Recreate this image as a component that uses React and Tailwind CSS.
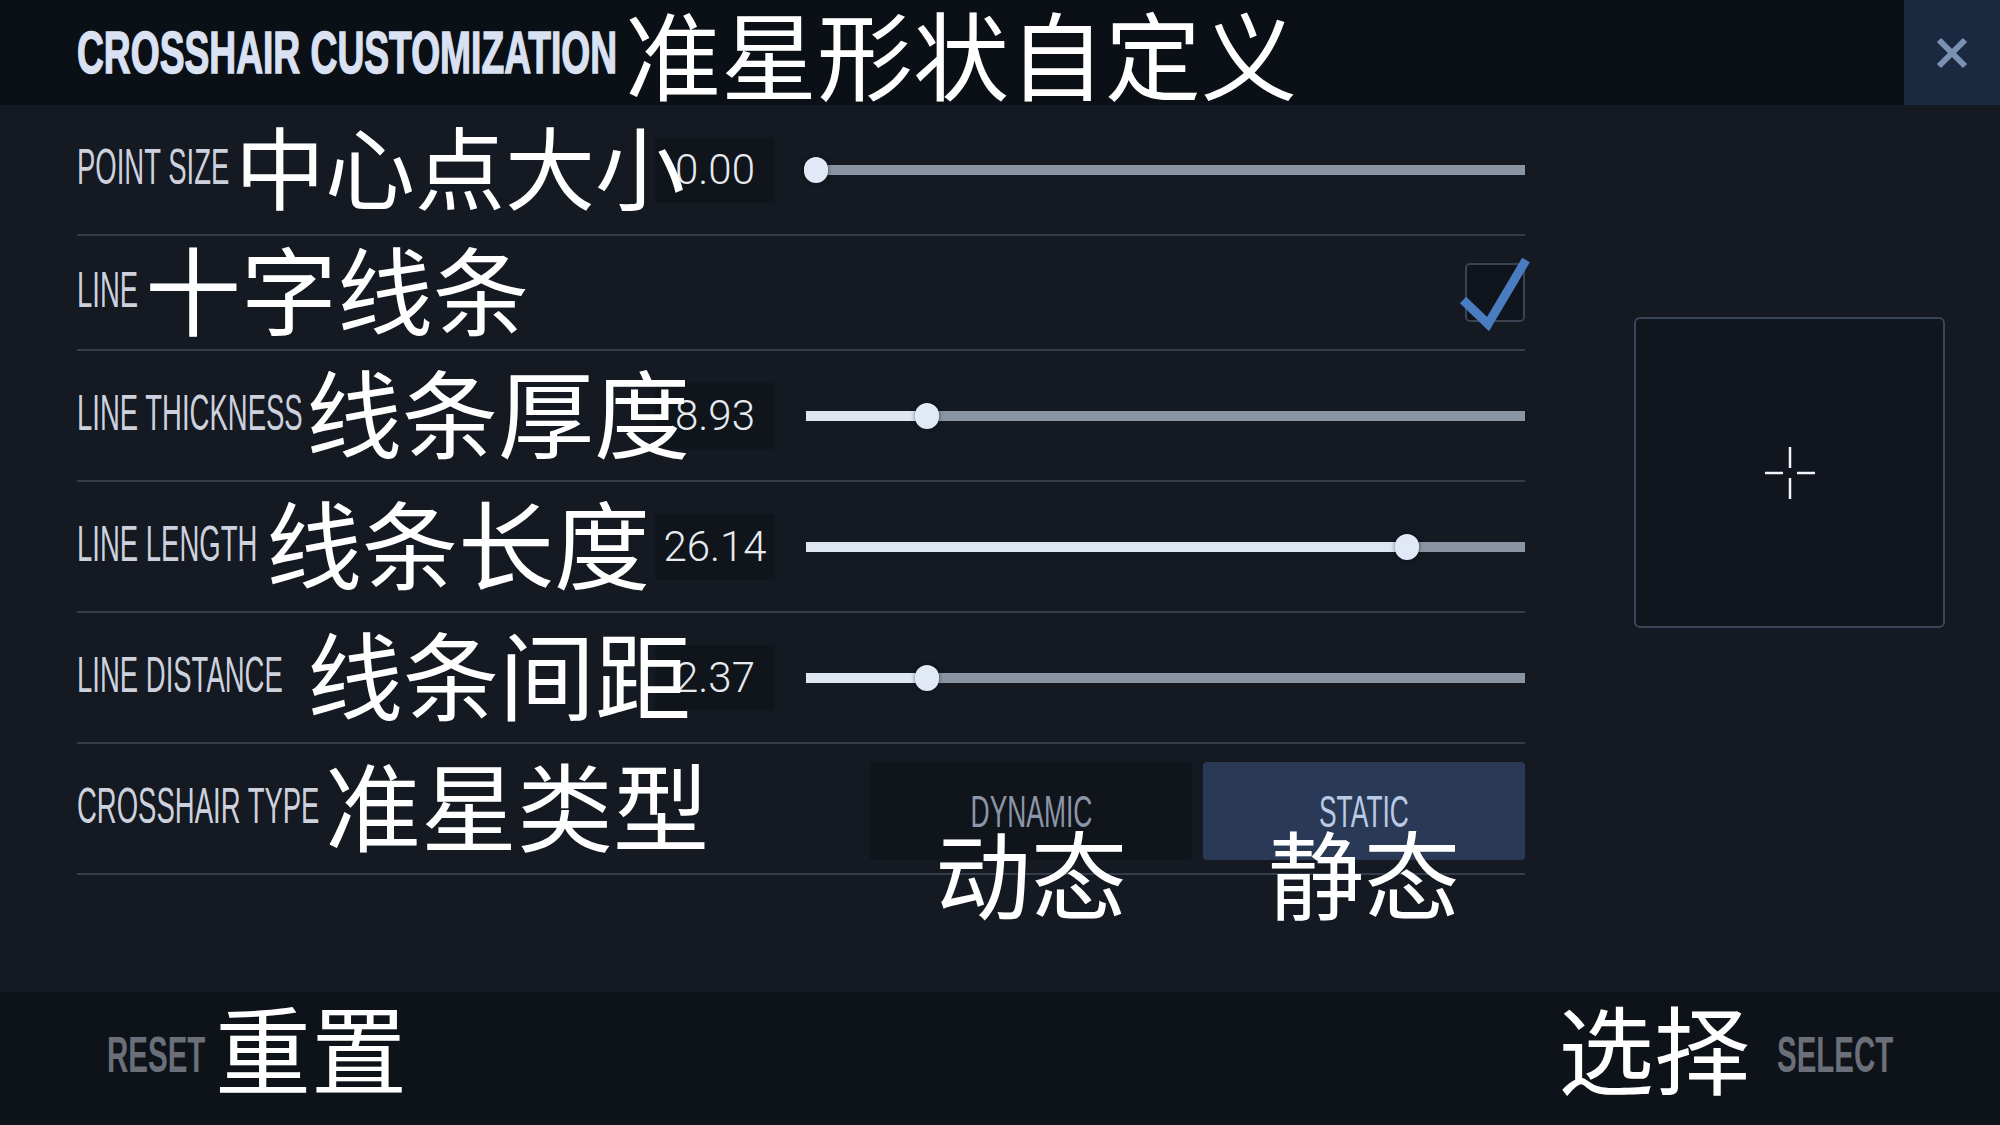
import React from 'react';

const sans = "font-['Liberation_Sans',Arial,sans-serif]";
const zh = "font-['Noto_Sans_CJK_SC','Noto_Sans',sans-serif]";

// Condensed caps: the game font is narrow, so squeeze Liberation Sans horizontally
function Cond({ children, className = '' }) {
    return <span className={`inline-block whitespace-nowrap leading-none ${sans} ${className}`}>{children}</span>;
}

function Zh({ children, className = 'relative' }) {
    return <span className={`z-10 inline-block whitespace-nowrap leading-none font-normal text-white ${zh} ${className}`}>{children}</span>;
}

function Label({ text, width, cjk, cjkSize = 'text-[96px]' }) {
    return (
        <div className="flex items-center shrink-0">
            <div className={`${width} shrink-0 -translate-y-[3px]`}>
                <Cond className="origin-left scale-x-[0.55] text-[50px] text-[#cdd1dd]">{text}</Cond>
            </div>
            <Zh className={`relative -translate-y-[6px] ${cjkSize}`}>{cjk}</Zh>
        </div>
    );
}

function Slider({ thumb }) {
    // thumb = centre of the knob, px from the start of the track
    return (
        <div className="relative w-[719px] h-[10px] bg-[#8a94a3] ml-[31px]">
            <div className="absolute left-0 top-0 h-full bg-[#dee6f2]" style={{ width: thumb }} />
            <div
                className="absolute top-1/2 -translate-y-1/2 -translate-x-1/2 w-[24px] h-[26px] rounded-full bg-[#e1e9f6] shadow-[0_0_4px_rgba(0,0,0,0.5)]"
                style={{ left: thumb }}
            />
        </div>
    );
}

function SliderRow({ label, width, cjk, cjkSize, value, thumb }) {
    return (
        <div className="h-[131px] border-b-2 border-[#363d4a] flex items-center">
            <div className="w-[578px] shrink-0 flex items-center">
                <Label text={label} width={width} cjk={cjk} cjkSize={cjkSize} />
            </div>
            <div className="w-[120px] h-[66px] shrink-0 bg-[#10141b] flex items-center justify-center">
                <span className="font-['Roboto',sans-serif] font-light text-[42px] leading-none text-[#e7eaef]">{value}</span>
            </div>
            <Slider thumb={thumb} />
        </div>
    );
}

function TypeButton({ en, cjk, active }) {
    return (
        <div className={`relative w-[322px] h-[98px] rounded-[4px] flex justify-center pt-[28px] ${active ? 'bg-[#2a3a56]' : 'bg-[#10141b]'}`}>
            <Cond className={`origin-center scale-x-[0.6] text-[44px] ${active ? 'text-[#b9cae6]' : 'text-[#8c96a8]'}`}>{en}</Cond>
            <Zh className="absolute top-[61px] left-1/2 -translate-x-1/2 text-[96px]">{cjk}</Zh>
        </div>
    );
}

export default function App() {
    return (
        <div className="w-[2000px] h-[1125px] flex flex-col bg-[#141922] overflow-hidden">
            {/* Header */}
            <div className="h-[105px] shrink-0 bg-[#0b0f16] flex items-center pl-[77px]">
                <div className="w-[548px] shrink-0">
                    <Cond className="origin-left scale-x-[0.62] text-[60px] font-bold text-[#d9e1f3] [-webkit-text-stroke:1.5px_#d9e1f3]">CROSSHAIR CUSTOMIZATION</Cond>
                </div>
                <Zh className="relative -translate-y-[1px] text-[96px]">准星形状自定义</Zh>
                <button className="ml-auto w-[96px] h-full bg-[#1a2940] flex items-center justify-center">
                    <svg width="32" height="32" viewBox="0 0 32 32">
                        <path d="M3 3 L29 29 M29 3 L3 29" stroke="#7b91b4" strokeWidth="6" />
                    </svg>
                </button>
            </div>

            {/* Settings */}
            <div className="flex-1 flex">
                <div className="ml-[77px] w-[1448px] shrink-0">
                    <SliderRow label="POINT SIZE" width="w-[158px]" cjk="中心点大小" cjkSize="text-[90px]" value="0.00" thumb={10} />

                    <div className="h-[115px] border-b-2 border-[#363d4a] flex items-center">
                        <Label text="LINE" width="w-[68px]" cjk="十字线条" />
                        <div className="ml-auto relative w-[60px] h-[59px] border-2 border-[#3a4352] rounded-[5px] bg-[#10141c]">
                            <svg className="absolute -left-[10px] -top-[10px]" width="80" height="80" viewBox="0 0 80 80">
                                <path d="M6 45 L31 69 L69 5" fill="none" stroke="#4a7cc0" strokeWidth="9" />
                            </svg>
                        </div>
                    </div>

                    <SliderRow label="LINE THICKNESS" width="w-[229px]" cjk="线条厚度" value="8.93" thumb={121} />
                    <SliderRow label="LINE LENGTH" width="w-[189px]" cjk="线条长度" value="26.14" thumb={601} />
                    <SliderRow label="LINE DISTANCE" width="w-[230px]" cjk="线条间距" value="2.37" thumb={121} />

                    <div className="h-[131px] border-b-2 border-[#363d4a] flex items-center">
                        <Label text="CROSSHAIR TYPE" width="w-[248px]" cjk="准星类型" />
                        <div className="ml-auto flex gap-[11px] translate-y-[2px]">
                            <TypeButton en="DYNAMIC" cjk="动态" />
                            <TypeButton en="STATIC" cjk="静态" active />
                        </div>
                    </div>
                </div>

                {/* Preview */}
                <div className="ml-[109px] mt-[212px] w-[311px] h-[311px] shrink-0 border-2 border-[#3a4659] rounded-[6px] bg-[#10151e] flex items-center justify-center">
                    <svg width="60" height="60" viewBox="0 0 60 60">
                        <path d="M5 30 H23 M37 30 H55 M30 4 V25 M30 35 V56" stroke="#f2f4f8" strokeWidth="2.5" />
                    </svg>
                </div>
            </div>

            {/* Footer */}
            <div className="h-[133px] shrink-0 bg-[#0e1219] flex items-center justify-between pl-[107px] pr-[106px]">
                <div className="flex items-center">
                    <div className="w-[108px] shrink-0 -translate-y-[4px]">
                        <Cond className="origin-left scale-x-[0.59] text-[50px] font-bold text-[#6a6f79]">RESET</Cond>
                    </div>
                    <Zh className="relative -translate-y-[13px] text-[96px]">重置</Zh>
                </div>
                <div className="flex items-center">
                    <Zh className="relative -translate-y-[13px] text-[96px]">选择</Zh>
                    <div className="w-[117px] ml-[27px] shrink-0 -translate-y-[4px]">
                        <Cond className="origin-left scale-x-[0.59] text-[50px] font-bold text-[#6a6f79]">SELECT</Cond>
                    </div>
                </div>
            </div>
        </div>
    );
}
